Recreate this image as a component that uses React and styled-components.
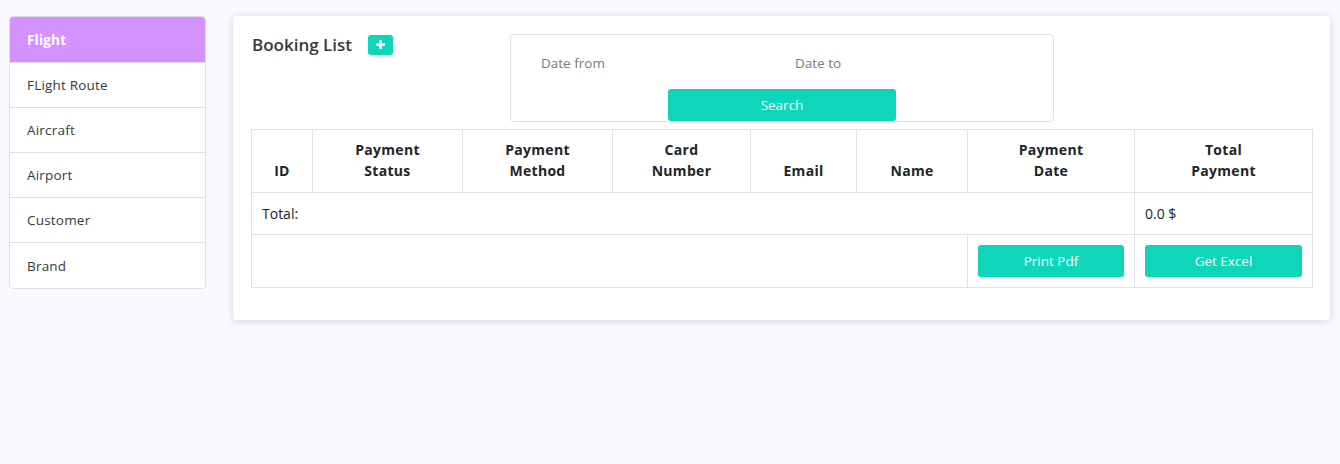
import React from "react";
import styled, { createGlobalStyle } from "styled-components";

const GlobalStyle = createGlobalStyle`
  * {
    box-sizing: border-box;
  }
  body {
    margin: 0;
    background: #f9fafe;
    font-family: "Open Sans", "Liberation Sans", sans-serif;
    color: #212529;
  }
`;

const menu = ["Flight", "FLight Route", "Aircraft", "Airport", "Customer", "Brand"];

const columns = [
  { label: "ID", width: 61 },
  { label: "Payment Status", width: 150 },
  { label: "Payment Method", width: 150 },
  { label: "Card Number", width: 138 },
  { label: "Email", width: 106 },
  { label: "Name", width: 111 },
  { label: "Payment Date", width: 167 },
  { label: "Total Payment", width: 178 },
];

export default function App() {
  return (
    <Page>
      <GlobalStyle />
      <Sidebar>
        {menu.map((item, i) => (
          <MenuItem key={item} $active={i === 0}>
            {item}
          </MenuItem>
        ))}
      </Sidebar>
      <Card>
        <Header>
          <TitleRow>
            <Title>Booking List</Title>
            <AddButton>
              <svg width="11" height="11" viewBox="0 0 11 11">
                <path d="M5.5 1v9M1 5.5h9" stroke="#fff" strokeWidth="2.6" />
              </svg>
            </AddButton>
          </TitleRow>
          <FilterBox>
            <Fields>
              <FieldLabel>Date from</FieldLabel>
              <FieldLabel>Date to</FieldLabel>
            </Fields>
            <SearchButton>Search</SearchButton>
          </FilterBox>
        </Header>
        <Table>
          <colgroup>
            {columns.map((c) => (
              <col key={c.label} style={{ width: c.width }} />
            ))}
          </colgroup>
          <thead>
            <tr>
              {columns.map((c) => (
                <Th key={c.label}>
                  {c.label.split(" ").map((w, i) => (
                    <React.Fragment key={w}>
                      {i > 0 && <br />}
                      {w}
                    </React.Fragment>
                  ))}
                </Th>
              ))}
            </tr>
          </thead>
          <tbody>
            <tr>
              <Td colSpan={7}>Total:</Td>
              <Td>0.0 $</Td>
            </tr>
            <tr>
              <Td colSpan={6}></Td>
              <Td>
                <ActionButton>Print Pdf</ActionButton>
              </Td>
              <Td>
                <ActionButton>Get Excel</ActionButton>
              </Td>
            </tr>
          </tbody>
        </Table>
      </Card>
    </Page>
  );
}

const Page = styled.div`
  display: flex;
  align-items: flex-start;
  padding: 16px 11px 16px 9px;
  gap: 27px;
`;

const Sidebar = styled.div`
  width: 197px;
  flex-shrink: 0;
  display: flex;
  flex-direction: column;
  background: #fff;
  border: 1px solid #dfdfe3;
  border-radius: 4px;
  overflow: hidden;
`;

const MenuItem = styled.div`
  height: 45px;
  display: flex;
  align-items: center;
  padding-left: 17px;
  font-size: 13.5px;
  letter-spacing: 0.2px;
  color: ${(p) => (p.$active ? "#fff" : "#343a40")};
  font-weight: ${(p) => (p.$active ? 700 : 400)};
  background: ${(p) => (p.$active ? "#d591fd" : "#fff")};
  & + & {
    border-top: 1px solid #dfdfe3;
  }
  &:last-child {
    height: 46px;
  }
`;

const Card = styled.div`
  flex: 1;
  background: #fff;
  border-radius: 4px;
  box-shadow: 0 1px 8px rgba(0, 0, 0, 0.16);
  padding: 18px 17px 32px 18px;
`;

const Header = styled.div`
  display: flex;
  align-items: flex-start;
  margin-bottom: 7px;
`;

const TitleRow = styled.div`
  width: 259px;
  display: flex;
  align-items: center;
  gap: 16px;
  padding-left: 1px;
  height: 21px;
`;

const Title = styled.h2`
  margin: 0;
  font-size: 17px;
  font-weight: 600;
  color: #343a40;
`;

const AddButton = styled.button`
  width: 25px;
  height: 20px;
  border: none;
  border-radius: 3px;
  background: #0fd6b9;
  display: flex;
  align-items: center;
  justify-content: center;
  padding: 0;
`;

const FilterBox = styled.div`
  width: 544px;
  height: 88px;
  border: 1px solid #dfdfe3;
  border-radius: 4px;
  padding-top: 17px;
  display: flex;
  flex-direction: column;
  align-items: center;
`;

const Fields = styled.div`
  align-self: stretch;
  display: grid;
  grid-template-columns: 254px 1fr;
  padding-left: 30px;
  height: 22px;
  align-items: center;
`;

const FieldLabel = styled.span`
  font-size: 13.5px;
  color: #7a7a80;
`;

const SearchButton = styled.button`
  margin-top: 15px;
  width: 228px;
  height: 32px;
  border: none;
  border-radius: 3px;
  background: #0fd6b9;
  color: #fff;
  font-family: inherit;
  font-size: 13.5px;
`;

const Table = styled.table`
  width: 1061px;
  table-layout: fixed;
  border-collapse: collapse;
  font-size: 14px;
`;

const Th = styled.th`
  border: 1px solid #dfe1e6;
  padding: 9px 10px 11px;
  line-height: 21px;
  vertical-align: bottom;
  text-align: center;
  font-weight: 700;
  letter-spacing: 0.3px;
  color: #212529;
`;

const Td = styled.td`
  border: 1px solid #dfe1e6;
  padding: 10px;
  line-height: 21px;
  color: #212529;
`;

const ActionButton = styled.button`
  width: 100%;
  height: 32px;
  display: block;
  border: none;
  border-radius: 3px;
  background: #0fd6b9;
  color: #fff;
  font-family: inherit;
  font-size: 13.5px;
`;
